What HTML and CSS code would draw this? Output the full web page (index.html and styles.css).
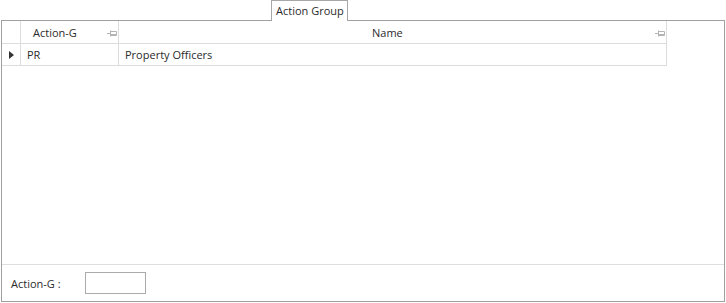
FILE: index.html
```html
<!DOCTYPE html>
<html lang="en">
<head>
    <meta charset="UTF-8">
    <title>Action Group</title>
    <link rel="stylesheet" href="styles.css">
</head>
<body>
    <div class="tabs">
        <div class="tab">Action Group</div>
    </div>
    <div class="panel">
        <div class="grid-area">
            <div class="grid">
                <div class="cell head indicator"></div>
                <div class="cell head col-code">
                    <span>Action-G</span>
                    <svg class="pin" width="10" height="7" viewBox="0 0 10 7"><path d="M0 3.5H3M3.5 0.5V6.5M3.5 1.5H9.5V5.5H3.5M3.5 4.5H9.5" fill="none" stroke="#b4b4b4" stroke-width="1"/></svg>
                </div>
                <div class="cell head col-name">
                    <span>Name</span>
                    <svg class="pin" width="10" height="7" viewBox="0 0 10 7"><path d="M0 3.5H3M3.5 0.5V6.5M3.5 1.5H9.5V5.5H3.5M3.5 4.5H9.5" fill="none" stroke="#b4b4b4" stroke-width="1"/></svg>
                </div>

                <div class="cell indicator"><span class="arrow"></span></div>
                <div class="cell">PR</div>
                <div class="cell">Property Officers</div>
            </div>
        </div>
        <div class="filter">
            <label class="filter-label">Action-G :</label>
            <input class="filter-input" type="text">
        </div>
    </div>
</body>
</html>
```

FILE: styles.css
```css
body {
    margin: 0;
    font-family: "Open Sans", "Noto Sans", sans-serif;
    font-size: 11px;
    color: #2b2b2b;
    background: #ffffff;
}

.tabs {
    display: flex;
    padding-left: 271px;
    height: 20px;
}

.tab {
    position: relative;
    z-index: 1;
    height: 21px;
    padding: 0 3px 0 4px;
    border: 1px solid #a7a7a7;
    border-bottom: none;
    background: #ffffff;
    line-height: 20px;
    box-sizing: border-box;
    white-space: nowrap;
}

.panel {
    margin: 0 1px;
    width: 724px;
    height: 282px;
    border: 1px solid #a0a0a0;
    box-sizing: border-box;
    display: flex;
    flex-direction: column;
}

.grid-area {
    flex: 1;
}

.grid {
    display: grid;
    grid-template-columns: 19px 98px 548px;
    grid-template-rows: 23px 22px;
    width: 665px;
}

.cell {
    display: flex;
    align-items: center;
    padding-left: 6px;
    border-right: 1px solid #dcdcdc;
    border-bottom: 1px solid #dcdcdc;
}

.cell.head {
    position: relative;
}

.col-code {
    padding-left: 12px;
}

.col-name {
    padding-left: 253px;
}

.cell.indicator {
    padding-left: 0;
    justify-content: center;
}

.pin {
    position: absolute;
    right: 1px;
    top: 9px;
}

.arrow {
    width: 0;
    height: 0;
    border-top: 4.5px solid transparent;
    border-bottom: 4.5px solid transparent;
    border-left: 5px solid #333333;
    margin-left: 1px;
}

.filter {
    height: 36px;
    border-top: 1px solid #dedede;
    display: flex;
    align-items: center;
    padding-left: 9px;
}

.filter-label {
    width: 74px;
}

.filter-input {
    width: 61px;
    height: 22px;
    box-sizing: border-box;
    border: 1px solid #ababab;
    padding: 0;
    margin: 0;
    font-family: inherit;
}
```
